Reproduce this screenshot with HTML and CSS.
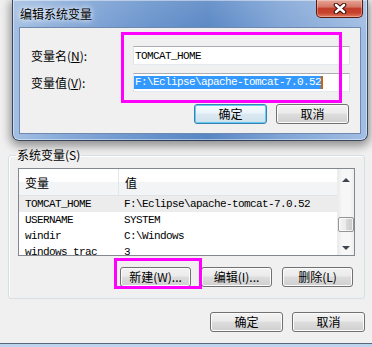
FILE: index.html
```html
<!DOCTYPE html>
<html lang="zh-CN">
<head>
    <meta charset="UTF-8">
    <meta name="viewport" content="width=device-width, initial-scale=1.0">
    <title>编辑系统变量</title>
    <link rel="stylesheet" href="styles.css">
</head>
<body>

    <!-- 弹出的编辑对话框 -->
    <div class="dlg">
        <div class="titlebar">
            <span class="title">编辑系统变量</span>
            <span class="close-btn">
                <svg width="14" height="11" viewBox="0 0 14 11">
                    <path d="M3 2 L11 9 M11 2 L3 9" stroke="#3b0d07" stroke-width="4.6" stroke-linecap="round"/>
                    <path d="M3 2 L11 9 M11 2 L3 9" stroke="#fff" stroke-width="2.6" stroke-linecap="round"/>
                </svg>
            </span>
        </div>
        <div class="client">
            <div class="fields">
                <label>变量名(<u>N</u>):</label>
                <div class="edit mono">TOMCAT_HOME</div>
                <label>变量值(<u>V</u>):</label>
                <div class="edit mono"><span class="sel">F:\Eclipse\apache-tomcat-7.0.52</span><span class="caret"></span></div>
            </div>
            <div class="btn-row">
                <button class="btn btn-m btn-default">确定</button>
                <button class="btn btn-m">取消</button>
            </div>
        </div>
        <div class="mark mark-edit"></div>
    </div>

    <!-- 后面的环境变量窗口 -->
    <div class="main">
        <fieldset class="group">
            <legend>系统变量(S)</legend>
            <div class="list">
                <div class="list-body">
                    <div class="list-head">
                        <span class="col1">变量</span>
                        <span class="col2">值</span>
                    </div>
                    <div class="row mono is-selected"><span class="col1">TOMCAT_HOME</span><span class="col2">F:\Eclipse\apache-tomcat-7.0.52</span></div>
                    <div class="row mono"><span class="col1">USERNAME</span><span class="col2">SYSTEM</span></div>
                    <div class="row mono"><span class="col1">windir</span><span class="col2">C:\Windows</span></div>
                    <div class="row mono"><span class="col1">windows_trac</span><span class="col2">3</span></div>
                </div>
                <div class="vscroll">
                    <span class="sb-arrow sb-up"></span>
                    <span class="sb-track"><span class="sb-thumb"></span></span>
                    <span class="sb-arrow sb-down"></span>
                </div>
            </div>
            <div class="btn-row group-btns">
                <span class="btn-wrap">
                    <button class="btn btn-s">新建(W)...</button>
                    <span class="mark mark-new"></span>
                </span>
                <button class="btn btn-s">编辑(I)...</button>
                <button class="btn btn-s">删除(L)</button>
            </div>
        </fieldset>
        <div class="btn-row bottom-btns">
            <button class="btn btn-m">确定</button>
            <button class="btn btn-m">取消</button>
        </div>
    </div>
    <div class="winframe"></div>

</body>
</html>
```

FILE: styles.css
```css
* {
    box-sizing: border-box;
}

body {
    margin: 0;
    width: 372px;
    height: 347px;
    overflow: hidden;
    background: #f0f0f0;
    font-family: "Noto Sans CJK SC", sans-serif;
    font-size: 12px;
    color: #000;
    display: flex;
    flex-direction: column;
}

.mono {
    font-family: "Liberation Mono", "Noto Sans CJK SC", monospace;
    font-size: 11px;
    letter-spacing: -0.6px;
}

/* ---- 对话框外框 (Aero) ---- */
.dlg {
    position: relative;
    z-index: 1;
    flex: none;
    margin-left: 12px;
    width: 356px;
    height: 141px;
    display: flex;
    flex-direction: column;
    border: 1px solid rgba(20, 30, 50, 0.75);
    border-top: none;
    border-radius: 0 0 7px 7px;
    background:
        linear-gradient(180deg, rgba(255, 255, 255, 0.12), rgba(255, 255, 255, 0) 25%),
        linear-gradient(90deg, #a3bfe3 0%, #86a9d8 15%, #6893cc 38%, #5886c4 55%, #7ea3d5 75%, #a2bee3 100%);
    box-shadow: inset 0 0 0 1px rgba(255, 255, 255, 0.45), 0 3px 10px 2px rgba(0, 0, 0, 0.4);
}

.titlebar {
    flex: none;
    height: 27px;
    display: flex;
    align-items: center;
    padding-left: 7px;
}

.title {
    line-height: 16px;
    text-shadow: 0 0 5px #fff, 0 0 8px rgba(255, 255, 255, 0.8);
}

.close-btn {
    margin-left: auto;
    margin-right: 4px;
    align-self: flex-start;
    width: 47px;
    height: 18px;
    border: 1px solid #5b1a12;
    border-top: none;
    border-radius: 0 0 5px 5px;
    background: linear-gradient(#e6a797, #d67766 40%, #c23f2c 50%, #c8412c 75%, #e07b5f);
    box-shadow: inset 0 0 0 1px rgba(255, 255, 255, 0.3);
    display: flex;
    align-items: center;
    justify-content: center;
}

.client {
    flex: none;
    height: 107px;
    margin: 0 6px 6px;
    border: 1px solid #6f8aae;
    background: #f0f0f0;
    padding: 18px 10px 0 11px;
}

.fields {
    display: grid;
    grid-template-columns: 102px 217px;
    row-gap: 8px;
    align-items: center;
}

.fields label {
    line-height: 19px;
}

.edit {
    height: 19px;
    border: 1px solid;
    border-color: #abadb3 #dbdfe6 #e3e9ef #e2e3ea;
    background: #fff;
    padding-left: 1px;
    display: flex;
    align-items: center;
    white-space: nowrap;
    overflow: hidden;
}

.sel {
    margin-left: -1px;
    padding-left: 1px;
    height: 13px;
    line-height: 13px;
    background: #3399ff;
    color: #fff;
}

.caret {
    width: 2px;
    height: 13px;
    background: #cc6600;
}

/* ---- 按钮 ---- */
.btn-row {
    display: flex;
    justify-content: flex-end;
    gap: 9px;
    margin-top: 12px;
    margin-right: 1px;
}

.btn {
    flex: none;
    height: 20px;
    padding: 0;
    border: 1px solid #707070;
    border-radius: 3px;
    background: linear-gradient(#f2f2f2, #ebebeb 45%, #dddddd 50%, #cfcfcf);
    box-shadow: inset 0 0 0 1px #fcfcfc;
    font: 12px/18px "Noto Sans CJK SC", sans-serif;
    color: #000;
}

.btn-m {
    width: 73px;
}

.btn-s {
    width: 71px;
}

.btn-default {
    border-color: #3c7fb1;
    box-shadow: inset 0 0 0 1px #62cdf2;
    background: linear-gradient(#f4fafd, #e9f3f9 45%, #dce9f1 50%, #cfe1ec);
}

/* 标注用的洋红色框 */
.mark {
    position: absolute;
    border: 3px solid #f0f;
    pointer-events: none;
}

.mark-edit {
    left: 108px;
    top: 32px;
    width: 221px;
    height: 71px;
}

.btn-wrap {
    position: relative;
    display: flex;
}

.mark-new {
    left: -6px;
    top: -9px;
    width: 88px;
    height: 31px;
}

/* ---- 后面窗口 ---- */
.main {
    flex: 1;
    padding: 0 7px 0 8px;
    display: flex;
    flex-direction: column;
}

.group {
    margin: 6px 0 0;
    padding: 5px 9px 11px;
    min-width: 0;
    border: 1px solid #d5dfe5;
    border-radius: 3px;
    box-shadow: inset 1px 1px 0 #fff;
}

.group legend {
    margin-left: -2px;
    padding: 0 1px;
    line-height: 16px;
}

.list {
    height: 88px;
    border: 1px solid #828790;
    background: #fff;
    display: flex;
    overflow: hidden;
}

.list-body {
    flex: 1;
    min-width: 0;
    overflow: hidden;
}

.list-head {
    display: flex;
    height: 27px;
    border-bottom: 1px solid #e0e3e8;
    background: linear-gradient(#fff 50%, #f3f4f6 50%);
}

.list-head span {
    display: flex;
    align-items: center;
}

.list-head .col1 {
    border-right: 1px solid #e3e5e8;
}

.col1 {
    flex: none;
    width: 100px;
    padding-left: 6px;
    overflow: hidden;
    white-space: nowrap;
}

.col2 {
    padding-left: 5px;
    white-space: nowrap;
}

.list-head .col2 {
    padding-left: 6px;
}

.row {
    display: flex;
    height: 16px;
    line-height: 16px;
}

.row.is-selected {
    background: #ececec;
}

.vscroll {
    flex: none;
    width: 17px;
    display: flex;
    flex-direction: column;
    border-left: 1px solid #ececec;
    background: linear-gradient(90deg, #ebebeb, #f7f7f7 25%, #f7f7f7 75%, #eeeeee);
}

.sb-arrow {
    height: 17px;
    display: flex;
    align-items: center;
    justify-content: center;
}

.sb-arrow::before {
    content: "";
    border-left: 4px solid transparent;
    border-right: 4px solid transparent;
}

.sb-up::before {
    margin-top: 5px;
    border-bottom: 4px solid #3f4450;
}

.sb-down::before {
    margin-top: 2px;
    border-top: 4px solid #3f4450;
}

.sb-track {
    flex: 1;
    padding-top: 31px;
}

.sb-thumb {
    display: block;
    height: 15px;
    border: 1px solid #959595;
    border-radius: 2px;
    background: linear-gradient(90deg, #f4f4f4, #ebebeb 50%, #dadada 50%, #c9c9c9);
    box-shadow: inset 0 0 0 1px rgba(255, 255, 255, 0.7);
}

.group-btns {
    gap: 10px;
    margin-top: 11px;
    margin-right: 2px;
}

.bottom-btns {
    margin-top: 13px;
    margin-right: 0;
}

.winframe {
    flex: none;
    height: 4px;
    border-top: 1px solid #59677a;
    background: #bed3ec;
}
```
